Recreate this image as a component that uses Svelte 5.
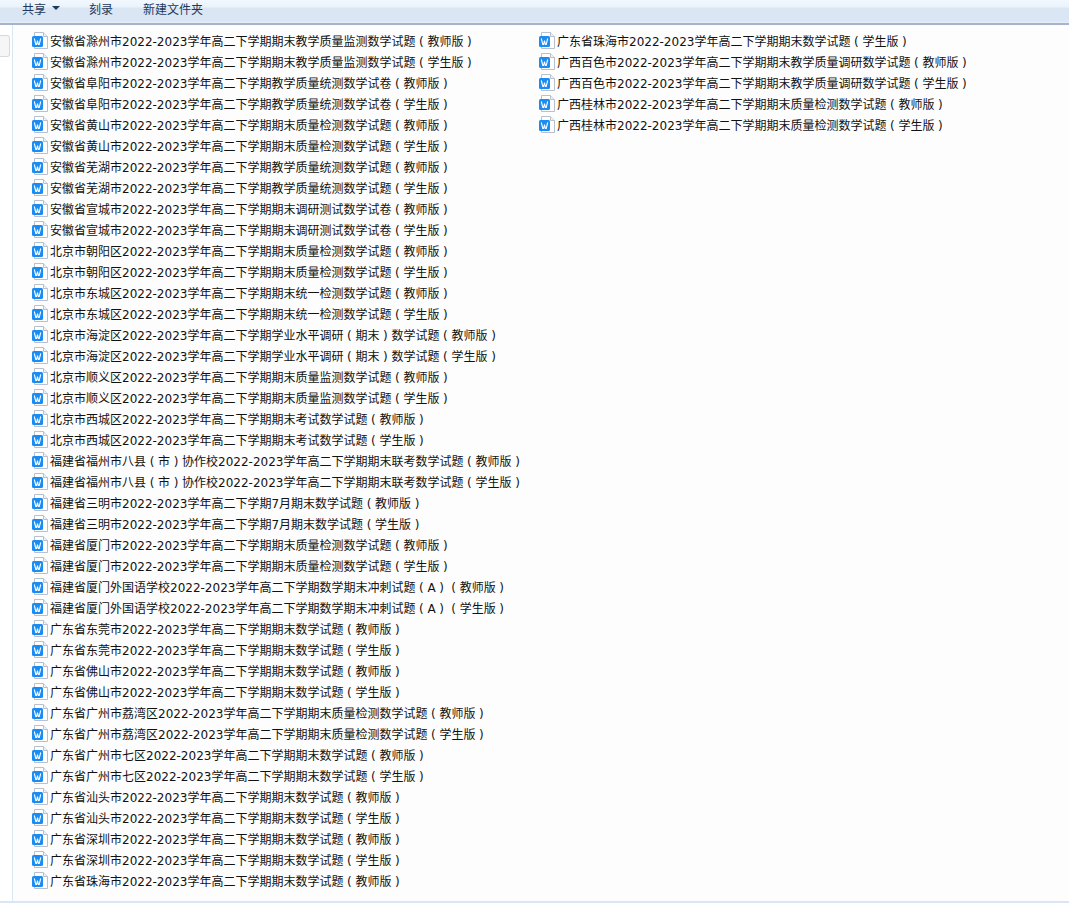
<script>
  const bases = [
    '安徽省滁州市2022-2023学年高二下学期期末教学质量监测数学试题',
    '安徽省阜阳市2022-2023学年高二下学期教学质量统测数学试卷',
    '安徽省黄山市2022-2023学年高二下学期期末质量检测数学试题',
    '安徽省芜湖市2022-2023学年高二下学期教学质量统测数学试题',
    '安徽省宣城市2022-2023学年高二下学期期末调研测试数学试卷',
    '北京市朝阳区2022-2023学年高二下学期期末质量检测数学试题',
    '北京市东城区2022-2023学年高二下学期期末统一检测数学试题',
    '北京市海淀区2022-2023学年高二下学期学业水平调研（期末）数学试题',
    '北京市顺义区2022-2023学年高二下学期期末质量监测数学试题',
    '北京市西城区2022-2023学年高二下学期期末考试数学试题',
    '福建省福州市八县（市）协作校2022-2023学年高二下学期期末联考数学试题',
    '福建省三明市2022-2023学年高二下学期7月期末数学试题',
    '福建省厦门市2022-2023学年高二下学期期末质量检测数学试题',
    '福建省厦门外国语学校2022-2023学年高二下学期数学期末冲刺试题（A）',
    '广东省东莞市2022-2023学年高二下学期期末数学试题',
    '广东省佛山市2022-2023学年高二下学期期末数学试题',
    '广东省广州市荔湾区2022-2023学年高二下学期期末质量检测数学试题',
    '广东省广州市七区2022-2023学年高二下学期期末数学试题',
    '广东省汕头市2022-2023学年高二下学期期末数学试题',
    '广东省深圳市2022-2023学年高二下学期期末数学试题',
    '广东省珠海市2022-2023学年高二下学期期末数学试题',
    '广西百色市2022-2023学年高二下学期期末教学质量调研数学试题',
    '广西桂林市2022-2023学年高二下学期期末质量检测数学试题'
  ];
  const files = bases.flatMap((b) => [b + '（教师版）', b + '（学生版）']);

  // the fullwidth brackets sit centred in their cell in the original font
  const parts = (name) => name.split(/([（）])/);
</script>

<div class="window">
  <div class="toolbar">
    <span class="tool share">共享<i class="caret"></i></span>
    <span class="tool burn">刻录</span>
    <span class="tool">新建文件夹</span>
  </div>
  <div class="body">
    <aside class="side"><div class="side-item"></div></aside>
    <main class="list">
      {#each files as name}
        <div class="row">
          <svg class="icon" width="16" height="17" viewBox="0 0 16 17">
            <path d="M2.5 .5H11.5L15.5 4.5V16.5H2.5Z" fill="#fff" stroke="#b9c0cb" />
            <path d="M11.5 .5V4.5H15.5" fill="#eef1f5" stroke="#b9c0cb" />
            <rect x="0" y="4" width="11" height="11" rx="1.5" fill="#1b8cf2" />
            <path d="M2.3 6.5L3.8 12.5H4.6L5.5 8.5L6.4 12.5H7.2L8.7 6.5" fill="none" stroke="#fff" stroke-width="1.1" />
          </svg>
          <span class="name">
            {#each parts(name) as part}
              {#if part === '（'}<span class="paren">(</span>{:else if part === '）'}<span class="paren">)</span>{:else}{part}{/if}
            {/each}
          </span>
        </div>
      {/each}
    </main>
  </div>
</div>

<style>
  :global(body) {
    margin: 0;
    background: #fff;
  }
  .window {
    width: 1069px;
    height: 903px;
    display: flex;
    flex-direction: column;
    overflow: hidden;
    font-family: "DejaVu Sans", "Noto Sans CJK SC", sans-serif;
    font-size: 12px;
    color: #111;
  }
  .toolbar {
    height: 25px;
    flex: none;
    display: flex;
    align-items: center;
    padding: 0 0 7px 22px;
    box-sizing: border-box;
    background: linear-gradient(#f3f8fe 0, #eaf2fc 7px, #dbe6f4 8px, #dbe6f4 21px, #e6eef8 23px);
    border-bottom: 2px solid #a5b3cd;
    color: #1e395b;
  }
  .tool {
    margin-right: 30px;
  }
  .share {
    display: flex;
    align-items: center;
    margin-right: 29px;
  }
  .caret {
    width: 0;
    height: 0;
    margin-left: 6px;
    border: 4px solid transparent;
    border-top: 4px solid #1e395b;
    border-bottom: 0;
  }
  .body {
    flex: 1;
    display: flex;
    border-bottom: 2px solid #d8e6f5;
    min-height: 0;
  }
  .side {
    width: 12px;
    flex: none;
    border-right: 1px solid #d8e6f5;
    padding-top: 10px;
  }
  .side-item {
    width: 10px;
    height: 22px;
    box-sizing: border-box;
    background: #f6f6f6;
    border: 1px solid #d9d9d9;
    border-left: 0;
    border-radius: 0 3px 3px 0;
  }
  .list {
    flex: 1;
    display: grid;
    grid-auto-flow: column;
    grid-template-rows: repeat(41, 21px);
    grid-auto-columns: 507px;
    padding: 5px 0 0 19px;
    background: #fdfdfd;
  }
  .row {
    display: flex;
    align-items: center;
    white-space: nowrap;
  }
  .icon {
    flex: none;
    margin-right: 2px;
  }
  .paren {
    display: inline-block;
    width: 12px;
    text-align: center;
  }
</style>
